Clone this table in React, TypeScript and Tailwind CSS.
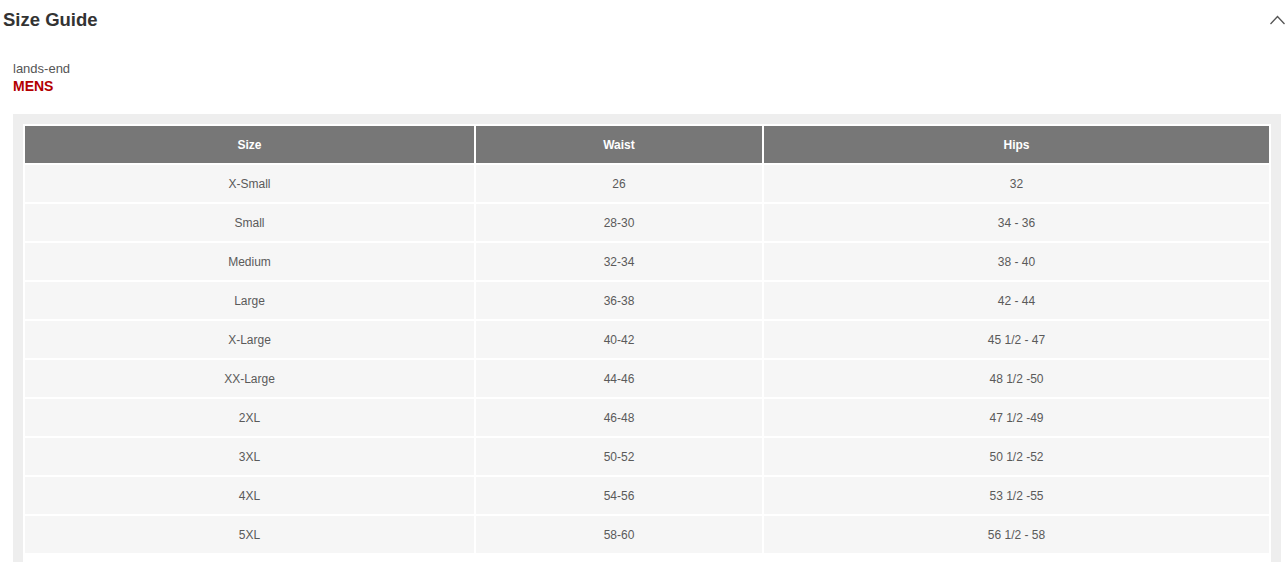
const rows = [
  ["X-Small", "26", "32"],
  ["Small", "28-30", "34 - 36"],
  ["Medium", "32-34", "38 - 40"],
  ["Large", "36-38", "42 - 44"],
  ["X-Large", "40-42", "45 1/2 - 47"],
  ["XX-Large", "44-46", "48 1/2 -50"],
  ["2XL", "46-48", "47 1/2 -49"],
  ["3XL", "50-52", "50 1/2 -52"],
  ["4XL", "54-56", "53 1/2 -55"],
  ["5XL", "58-60", "56 1/2 - 58"],
];

const App = () => {
  return (
    <div className="w-[1285px] min-h-[562px] bg-white font-['Liberation_Sans',Arial,sans-serif]">
      {/* Header */}
      <div className="flex items-center justify-between h-[40px] pl-[3px]">
        <h2 className="text-[18.5px] font-bold text-[#333333]">Size Guide</h2>
        <svg width="15" height="11" viewBox="0 0 15 11" className="mb-[2px]">
          <polyline points="0.5,10 7.5,2.5 14.5,10" fill="none" stroke="#555555" strokeWidth="1.3" />
        </svg>
      </div>

      {/* Brand */}
      <div className="pl-[13px] pt-[21px]">
        <div className="text-[13px] leading-[16px] text-[#555555]">lands-end</div>
        <div className="text-[14px] leading-[18px] font-bold text-[#b30000]">MENS</div>
      </div>

      {/* Table */}
      <div className="ml-[13px] mr-[4px] mt-[19px] bg-[#eeeeee] px-[10px] pt-[10px] pb-[10px]">
        <div className="bg-white pb-[12px]">
          <table className="w-full bg-white border-separate border-spacing-[2px] text-[12px]">
            <thead>
              <tr>
                <th className="w-[449px] h-[37px] p-0 bg-[#777777] text-white font-bold">Size</th>
                <th className="w-[286px] h-[37px] p-0 bg-[#777777] text-white font-bold">Waist</th>
                <th className="h-[37px] p-0 bg-[#777777] text-white font-bold">Hips</th>
              </tr>
            </thead>
            <tbody>
              {rows.map((r) => (
                <tr key={r[0]}>
                  {r.map((c, i) => (
                    <td key={i} className="h-[37px] p-0 bg-[#f6f6f6] text-center text-[#5a5a5a]">
                      {c}
                    </td>
                  ))}
                </tr>
              ))}
            </tbody>
          </table>
        </div>
      </div>
    </div>
  );
};

export default App;
